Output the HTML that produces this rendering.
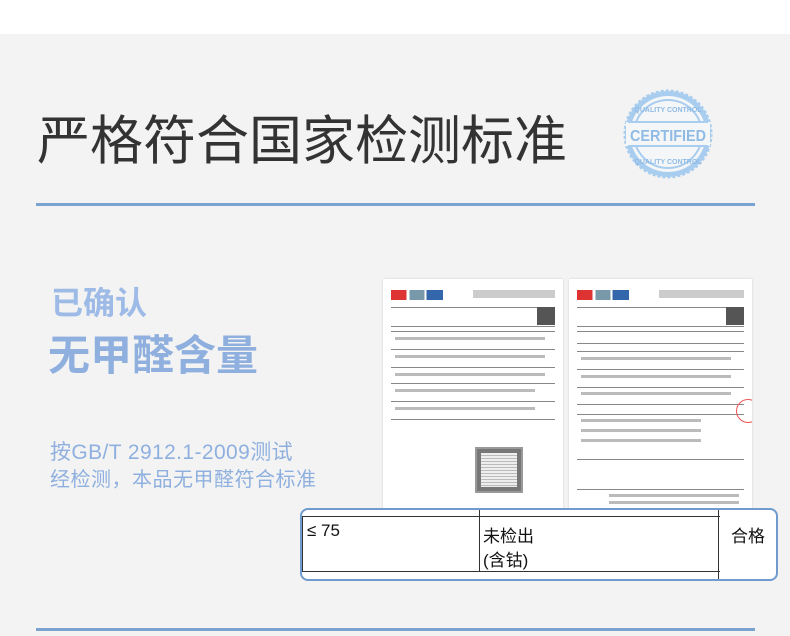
<!DOCTYPE html><html><head><meta charset="utf-8"><style>
body{margin:0;width:790px;height:636px;overflow:hidden;background:#f3f3f3;position:relative;font-family:"Liberation Sans","Noto Sans CJK SC",sans-serif}
.top{position:absolute;left:0;top:0;width:790px;height:34px;background:#fff}
.t{position:absolute;white-space:nowrap}
.line{position:absolute;left:36px;width:719px;height:3px;background:#7aa3d2}
.doc{position:absolute;background:#fff;box-shadow:0 0 2px #ccc;overflow:hidden}
.r{position:absolute;left:8px;right:8px;height:1px;background:#888}
.g{position:absolute;height:3px;background:#bbb}
</style></head><body>
<div class="top"></div>
<div class="t" style="left:37px;top:99px;font-size:53px;color:#333">严格符合国家检测标准</div>
<svg style="position:absolute;left:622px;top:88px" width="92" height="92" viewBox="0 0 92 92">
<circle cx="46" cy="46" r="43" fill="#a9cdee" stroke="#a9cdee" stroke-width="3" stroke-dasharray="3 2"/>
<circle cx="46" cy="46" r="38" fill="#f4f6f8"/>
<circle cx="46" cy="46" r="34" fill="none" stroke="#a9cdee" stroke-width="2"/>
<rect x="4" y="34" width="84" height="24" fill="#f4f6f8"/>
<line x1="6" y1="34" x2="86" y2="34" stroke="#a9cdee" stroke-width="2"/><line x1="6" y1="58" x2="86" y2="58" stroke="#a9cdee" stroke-width="2"/>
<text x="46" y="53" text-anchor="middle" font-family="Liberation Sans" font-weight="bold" font-size="16" fill="#8fbbe5" textLength="76" lengthAdjust="spacingAndGlyphs">CERTIFIED</text>
<text x="46" y="24" text-anchor="middle" font-family="Liberation Sans" font-weight="bold" font-size="7" fill="#8fbbe5">QUALITY CONTROL</text>
<text x="46" y="76" text-anchor="middle" font-family="Liberation Sans" font-weight="bold" font-size="7" fill="#8fbbe5">QUALITY CONTROL</text>
</svg>
<div class="line" style="top:203px"></div>
<div class="t" style="left:51px;top:278px;font-size:32px;color:#9dbbe6;font-weight:bold">已确认</div>
<div class="t" style="left:48px;top:322px;font-size:42px;color:#8fb0df;font-weight:bold">无甲醛含量</div>
<div class="t" style="left:50px;top:436px;font-size:21px;color:#8fb0df;letter-spacing:0.4px">按GB/T 2912.1-2009测试</div>
<div class="t" style="left:50px;top:463px;font-size:20px;color:#8fb0df;letter-spacing:0.5px">经检测，本品无甲醛符合标准</div>

<div class="doc" style="left:383px;top:279px;width:180px;height:232px">
<div style="position:absolute;left:8px;top:11px;width:52px;height:10px;background:linear-gradient(90deg,#d33 0 30%,#fff 30% 36%,#79a 36% 64%,#fff 64% 68%,#36a 68%)"></div>
<div style="position:absolute;left:90px;top:11px;width:82px;height:8px;background:#ccc"></div>
<div class="r" style="top:28px"></div><div class="r" style="top:47px"></div>
<div style="position:absolute;right:8px;top:28px;width:18px;height:18px;background:#555"></div>
<div class="r" style="top:52px"></div><div class="r" style="top:70px"></div><div class="r" style="top:88px"></div><div class="r" style="top:104px"></div><div class="r" style="top:122px"></div><div class="r" style="top:140px"></div>
<div class="g" style="left:12px;top:58px;width:150px"></div><div class="g" style="left:12px;top:76px;width:150px"></div><div class="g" style="left:12px;top:94px;width:150px"></div><div class="g" style="left:12px;top:110px;width:140px"></div><div class="g" style="left:12px;top:128px;width:140px"></div>
<div style="position:absolute;left:92px;top:168px;width:44px;height:42px;background:#777;border:2px solid #999"><div style="margin:4px;height:34px;background:repeating-linear-gradient(180deg,#eee 0 2px,#bbb 2px 3px)"></div></div>
</div>
<div class="doc" style="left:569px;top:279px;width:183px;height:232px">
<div style="position:absolute;left:8px;top:11px;width:52px;height:10px;background:linear-gradient(90deg,#d33 0 30%,#fff 30% 36%,#79a 36% 64%,#fff 64% 68%,#36a 68%)"></div>
<div style="position:absolute;left:90px;top:11px;width:85px;height:8px;background:#ccc"></div>
<div class="r" style="top:28px"></div><div class="r" style="top:47px"></div>
<div style="position:absolute;right:8px;top:28px;width:18px;height:18px;background:#555"></div>
<div class="r" style="top:52px"></div><div class="r" style="top:64px"></div><div class="r" style="top:72px"></div><div class="r" style="top:90px"></div><div class="r" style="top:108px"></div><div class="r" style="top:125px"></div><div class="r" style="top:135px"></div><div class="r" style="top:180px"></div><div class="r" style="top:210px"></div>
<div class="g" style="left:12px;top:78px;width:150px"></div><div class="g" style="left:12px;top:96px;width:150px"></div><div class="g" style="left:12px;top:113px;width:150px"></div><div class="g" style="left:12px;top:140px;width:120px"></div><div class="g" style="left:12px;top:150px;width:120px"></div><div class="g" style="left:12px;top:160px;width:120px"></div><div class="g" style="left:40px;top:215px;width:130px"></div><div class="g" style="left:40px;top:222px;width:130px"></div>
<div style="position:absolute;right:-8px;top:120px;width:22px;height:22px;border:1px solid #e55;border-radius:50%"></div>
</div>

<div style="position:absolute;left:300px;top:508px;width:474px;height:69px;background:#fff;border:2px solid #6f9bcf;border-radius:8px;overflow:hidden">
<div style="position:absolute;left:0;top:6px;width:418px;height:1px;background:#333"></div>
<div style="position:absolute;left:0;top:61px;width:418px;height:1px;background:#333"></div>
<div style="position:absolute;left:0;top:6px;width:1px;height:56px;background:#333"></div>
<div style="position:absolute;left:177px;top:0;width:1px;height:62px;background:#333"></div>
<div style="position:absolute;left:416px;top:0;width:1px;height:69px;background:#333"></div>
<div class="t" style="left:5px;top:11px;font-size:17px;color:#111">≤ 75</div>
<div class="t" style="left:181px;top:12px;font-size:17px;color:#111">未检出</div>
<div class="t" style="left:181px;top:36px;font-size:17px;color:#111">(含钴)</div>
<div class="t" style="left:429px;top:12px;font-size:17px;color:#111">合格</div>
</div>
<div style="position:absolute;left:36px;top:628px;width:719px;height:3px;background:#7aa3d2"></div>
</body></html>
